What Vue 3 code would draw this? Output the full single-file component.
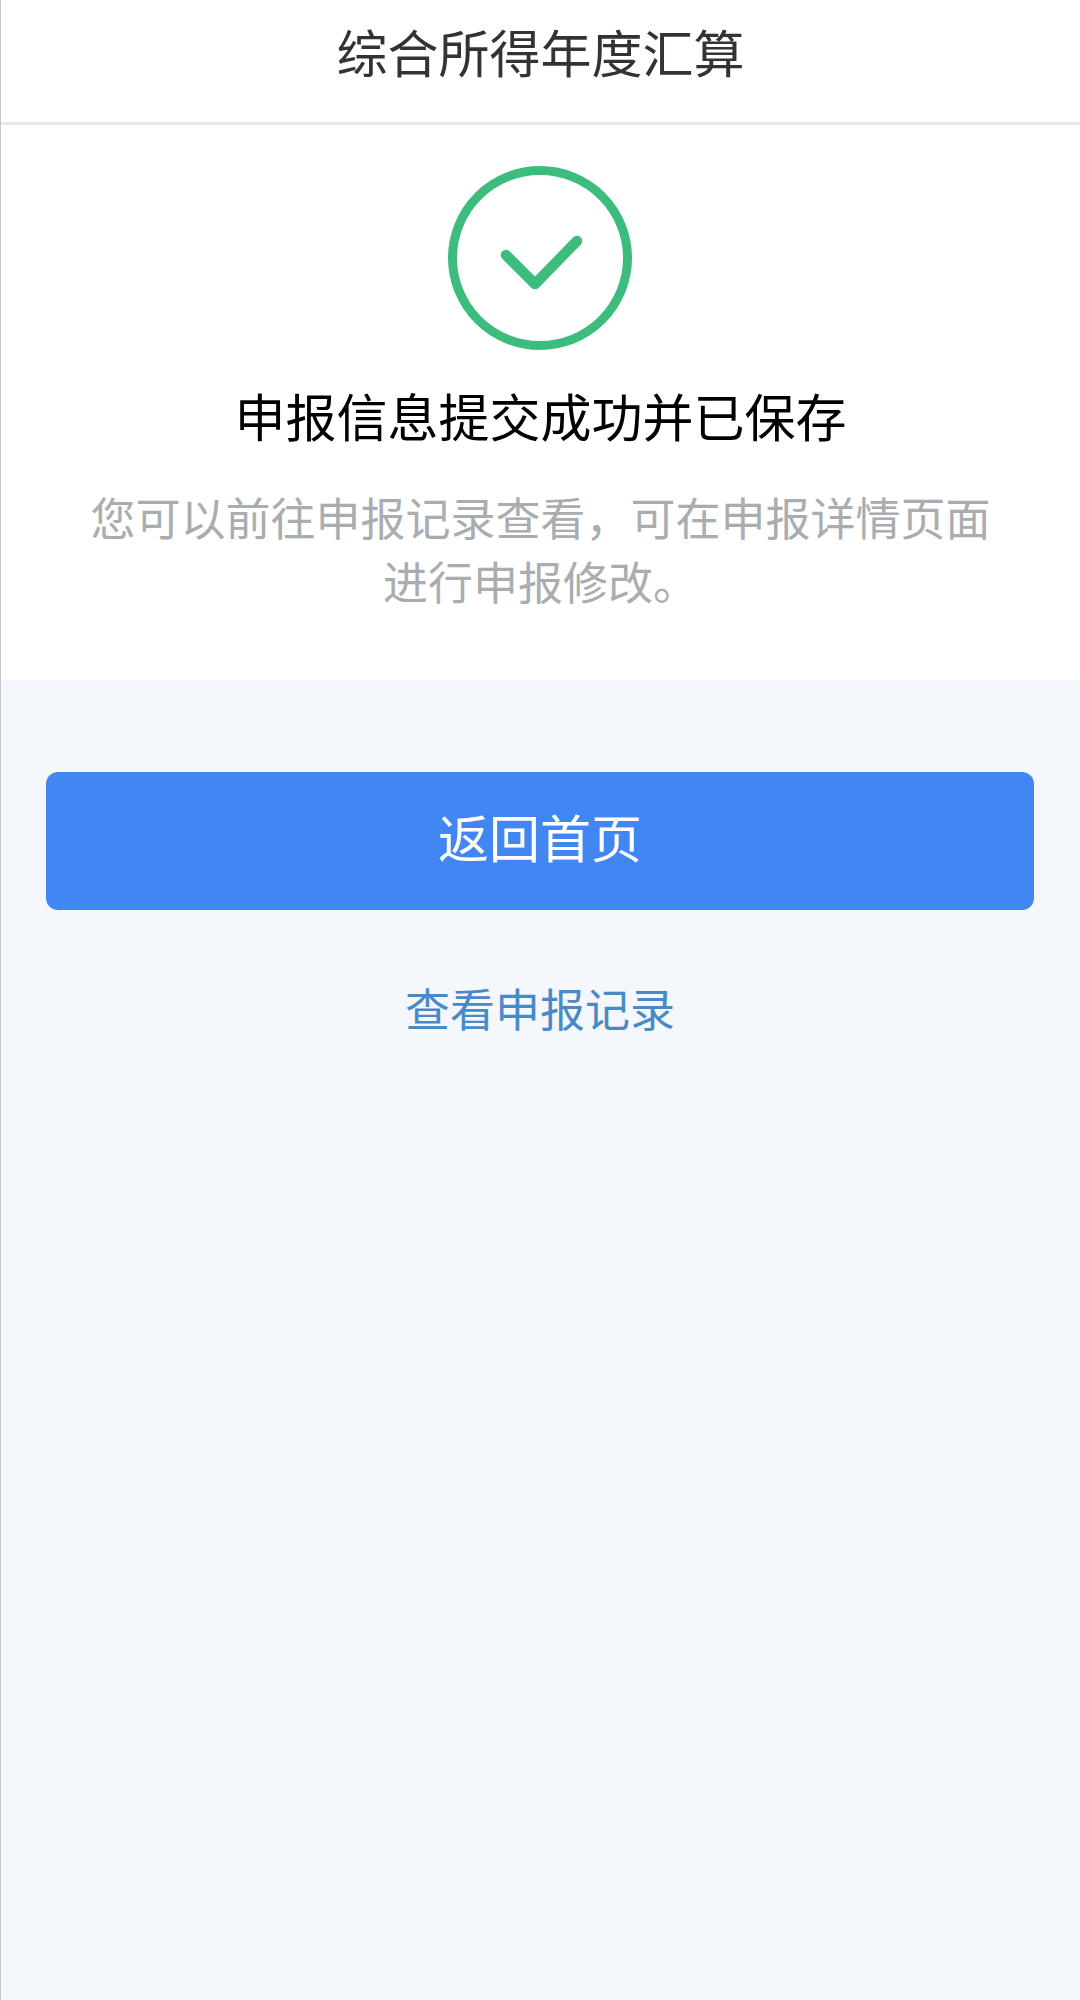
<script setup>
const title = '综合所得年度汇算';
</script>

<template>
  <div class="page">
    <header class="nav">{{ title }}</header>
    <section class="result">
      <svg class="ok" width="186" height="186" viewBox="1 0 186 186">
        <circle cx="93" cy="93" r="87.5" fill="none" stroke="#3dbd7d" stroke-width="9" />
        <path d="M59 90 L88 119 L130 76" fill="none" stroke="#3dbd7d" stroke-width="10.5" stroke-linecap="round" stroke-linejoin="round" />
      </svg>
      <h1>申报信息提交成功并已保存</h1>
      <p>您可以前往申报记录查看，可在申报详情页面<br />进行申报修改。</p>
    </section>
    <div class="actions">
      <button class="home">返回首页</button>
      <a class="link">查看申报记录</a>
    </div>
  </div>
</template>

<style scoped>
.page {
  min-height: 2000px;
  box-sizing: border-box;
  border-left: 1px solid #c4c6cc;
  background: #f4f7fb;
  font-family: "Noto Sans CJK SC", "Liberation Sans", sans-serif;
}

.nav {
  height: 122px;
  line-height: 102px;
  text-align: center;
  font-size: 51px;
  color: #333;
  background: #fff;
  border-bottom: 3px solid #e8e8e8;
}

.result {
  background: #fff;
  height: 555px;
  padding-top: 40px;
  box-sizing: border-box;
  text-align: center;
}

.ok {
  display: block;
  margin: 0 auto;
}

h1 {
  margin: 29px 0 0;
  font-size: 51px;
  line-height: 70px;
  font-weight: 400;
  color: #000;
}

p {
  margin: 35px 0 0;
  font-size: 45px;
  line-height: 64px;
  color: #a9adb0;
}

.actions {
  padding: 92px 46px 0 45px;
  display: flex;
  flex-direction: column;
  align-items: center;
}

.home {
  width: 100%;
  height: 138px;
  padding: 0 0 10px;
  border: none;
  border-radius: 12px;
  background: #4286f3;
  color: #fff;
  font-family: inherit;
  font-size: 51px;
}

.link {
  margin-top: 65px;
  font-size: 45px;
  color: #4a89c8;
}
</style>
